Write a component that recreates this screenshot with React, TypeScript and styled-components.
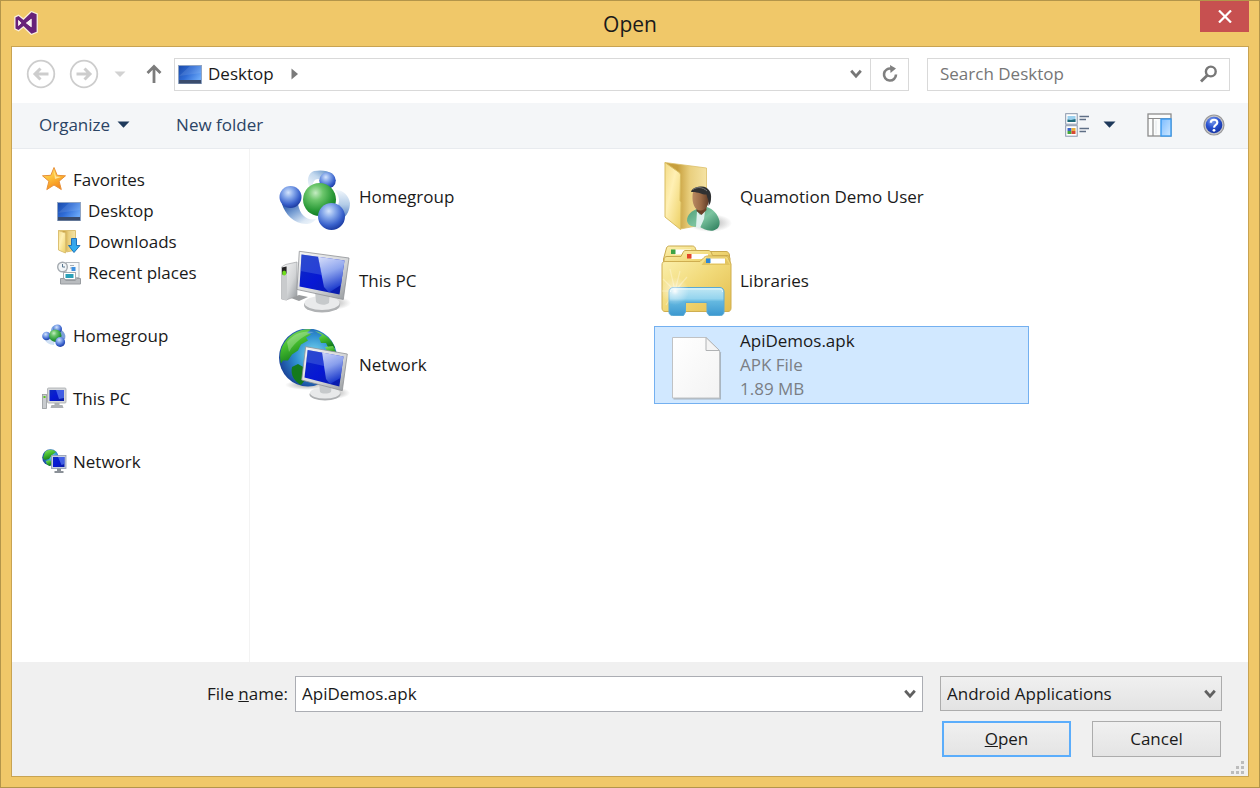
import React from "react";
import styled, { createGlobalStyle } from "styled-components";

const GlobalStyle = createGlobalStyle`
  *, *::before, *::after { box-sizing: border-box; }
  body {
    margin: 0;
    font-family: "Open Sans", "Noto Sans", sans-serif;
    font-size: 17px;
    line-height: 24px;
    color: #1a1a1a;
  }
  button, input, select {
    font: inherit;
    color: inherit;
    margin: 0;
    padding: 0;
    border: 0;
    border-radius: 0;
    background: none;
    outline: none;
  }
  svg { display: block; flex: none; }
`;

/* ---------- window frame ---------- */

const Frame = styled.div`
  display: flex;
  flex-direction: column;
  min-height: 100vh;
  padding: 0 10px 10px;
  background: #f0c869;
  border: 1px solid #b3954a;
`;

const TitleBar = styled.header`
  display: grid;
  grid-template-columns: 1fr auto 1fr;
  align-items: center;
  height: 45px;
`;

const AppMark = styled.div`
  padding: 0 0 2px 3px;
`;

const Title = styled.h1`
  margin: 0;
  font-size: 21px;
  font-weight: 400;
  line-height: 28px;
`;

const CloseButton = styled.button`
  display: grid;
  place-items: center;
  align-self: start;
  justify-self: end;
  width: 49px;
  height: 31px;
  background: #c75050;
`;

const Dialog = styled.main`
  display: flex;
  flex-direction: column;
  flex: 1;
  background: #fff;
  border: 1px solid #c8a352;
`;

/* ---------- navigation row ---------- */

const NavRow = styled.div`
  display: flex;
  align-items: center;
  height: 56px;
  padding: 0 18px 2px 14px;
`;

const History = styled.div`
  display: flex;
  align-items: center;
  gap: 13px;
  margin-right: 9px;
`;

const IconButton = styled.button`
  display: grid;
  place-items: center;
`;

const AddressBar = styled.div`
  display: flex;
  flex: 1;
  height: 33px;
  margin-right: 18px;
  border: 1px solid #d9d9d9;
`;

const Crumb = styled.button`
  display: flex;
  align-items: center;
  gap: 6px;
  padding: 0 3px;
`;

const CrumbArrow = styled.span`
  padding-left: 11px;
`;

const AddressDrop = styled(IconButton)`
  width: 28px;
  margin-left: auto;
`;

const Refresh = styled(IconButton)`
  width: 38px;
  border-left: 1px solid #d9d9d9;
`;

const SearchBox = styled.form`
  display: flex;
  align-items: center;
  width: 303px;
  height: 33px;
  padding: 0 11px 0 12px;
  border: 1px solid #d9d9d9;

  input {
    flex: 1;
    min-width: 0;
  }
  input::placeholder {
    color: #767676;
    opacity: 1;
  }
`;

/* ---------- command bar ---------- */

const CommandBar = styled.div`
  display: flex;
  align-items: center;
  height: 46px;
  padding: 0 23px 2px 27px;
  color: #2b4465;
  background: #f4f6f8;
  border-bottom: 1px solid #e8ebef;
`;

const Command = styled.button`
  display: flex;
  align-items: center;
  gap: 7px;
  margin-right: 46px;
`;

const ViewTools = styled.div`
  display: flex;
  align-items: center;
  gap: 31px;
  margin-left: auto;
`;

const ViewMode = styled.button`
  display: flex;
  align-items: center;
  gap: 14px;
`;

/* ---------- body ---------- */

const Body = styled.div`
  display: flex;
  flex: 1;
`;

const Tree = styled.nav`
  display: flex;
  flex-direction: column;
  gap: 32px;
  width: 238px;
  padding: 15px 8px 15px 30px;
  border-right: 1px solid #f3f3f3;
`;

const TreeGroup = styled.div`
  display: flex;
  flex-direction: column;
`;

const TreeItem = styled.button<{ $child?: boolean }>`
  display: flex;
  align-items: center;
  gap: 7px;
  height: 31px;
  padding-left: ${(p) => (p.$child ? 15 : 0)}px;
  text-align: left;
`;

const Tiles = styled.section`
  display: grid;
  grid-template-columns: repeat(auto-fill, 375px);
  align-content: start;
  gap: 6px;
  flex: 1;
  padding: 9px 0 9px 23px;
`;

const Tile = styled.button<{ $selected?: boolean }>`
  display: flex;
  align-items: center;
  gap: 8px;
  height: 78px;
  padding: 0 5px;
  text-align: left;
  border: 1px solid ${(p) => (p.$selected ? "#74b0f0" : "transparent")};
  background: ${(p) => (p.$selected ? "#d1e8ff" : "transparent")};
`;

const TileText = styled.span`
  display: flex;
  flex-direction: column;
`;

const Detail = styled.span`
  color: #7b7f85;
`;

/* ---------- footer ---------- */

const Footer = styled.footer`
  position: relative;
  display: flex;
  flex-direction: column;
  gap: 9px;
  padding: 14px 26px 19px 12px;
  background: #f0f0f0;
`;

const FieldRow = styled.div`
  display: flex;
  align-items: flex-start;
`;

const FieldLabel = styled.label`
  width: 264px;
  margin-right: 7px;
  line-height: 35px;
  text-align: right;
`;

const FileCombo = styled.div`
  display: flex;
  flex: 1;
  height: 36px;
  margin-right: 17px;
  background: #fff;
  border: 1px solid #abadb3;

  input {
    flex: 1;
    min-width: 0;
    padding-left: 6px;
  }
  button {
    width: 25px;
  }
`;

const TypeSelect = styled.div`
  position: relative;
  width: 282px;
  height: 35px;

  select {
    width: 100%;
    height: 100%;
    padding-left: 6px;
    appearance: none;
    border: 1px solid #acacac;
    background: linear-gradient(#f0f0f0, #e3e3e3);
  }
  svg {
    position: absolute;
    top: 13px;
    right: 6px;
    pointer-events: none;
  }
`;

const Actions = styled.div`
  display: flex;
  justify-content: flex-end;
  gap: 21px;
  padding-right: 1px;
`;

const ActionButton = styled.button<{ $primary?: boolean }>`
  width: 129px;
  height: 36px;
  border: ${(p) => (p.$primary ? "2px solid #5badfb" : "1px solid #acacac")};
  background: linear-gradient(#f0f0f0, #e4e4e4);
`;

const Grip = styled.div`
  position: absolute;
  right: 4px;
  bottom: 2px;
`;

/* ---------- glyphs ---------- */

const Defs = () => (
  <svg width="0" height="0" style={{ position: "absolute" }} aria-hidden="true">
    <defs>
      <radialGradient id="blueBall" cx="0.4" cy="0.3" r="0.7">
        <stop offset="0" stopColor="#d4e4fc" />
        <stop offset="0.35" stopColor="#86a8ea" />
        <stop offset="0.75" stopColor="#3a62cc" />
        <stop offset="1" stopColor="#1e3ea4" />
      </radialGradient>
      <radialGradient id="greenBall" cx="0.38" cy="0.3" r="0.75">
        <stop offset="0" stopColor="#c4ecc2" />
        <stop offset="0.3" stopColor="#6cc66c" />
        <stop offset="0.7" stopColor="#2a9a38" />
        <stop offset="1" stopColor="#0f7420" />
      </radialGradient>
      <linearGradient id="swooshDown" x1="0" y1="0" x2="1" y2="1">
        <stop offset="0" stopColor="#1f4ea4" />
        <stop offset="0.4" stopColor="#7fa4d6" />
        <stop offset="0.75" stopColor="#dce8f5" />
        <stop offset="1" stopColor="#f6fafd" />
      </linearGradient>
      <linearGradient id="swooshUp" x1="0" y1="1" x2="1" y2="0">
        <stop offset="0" stopColor="#f4f8fc" />
        <stop offset="0.5" stopColor="#c2d8ee" />
        <stop offset="1" stopColor="#4a80bc" />
      </linearGradient>
      <linearGradient id="swooshRight" x1="0" y1="0" x2="0" y2="1">
        <stop offset="0" stopColor="#f2f7fc" />
        <stop offset="0.5" stopColor="#b4cde8" />
        <stop offset="1" stopColor="#4b78be" />
      </linearGradient>
      <linearGradient id="screen" x1="0" y1="0" x2="1" y2="1">
        <stop offset="0" stopColor="#0e2cc0" />
        <stop offset="0.5" stopColor="#0718d4" />
        <stop offset="1" stopColor="#0a1ea0" />
      </linearGradient>
      <linearGradient id="glare" x1="0" y1="0" x2="0.3" y2="1">
        <stop offset="0" stopColor="#f0f5ff" />
        <stop offset="0.5" stopColor="#9fb6f2" />
        <stop offset="1" stopColor="#1f3fd0" />
      </linearGradient>
      <linearGradient id="metal" x1="0" y1="0" x2="1" y2="1">
        <stop offset="0" stopColor="#f6f6f6" />
        <stop offset="0.6" stopColor="#d2d4d6" />
        <stop offset="1" stopColor="#94989c" />
      </linearGradient>
      <radialGradient id="ocean" cx="0.6" cy="0.45" r="0.65">
        <stop offset="0" stopColor="#7fdcf2" />
        <stop offset="0.5" stopColor="#2f8fd0" />
        <stop offset="1" stopColor="#173a92" />
      </radialGradient>
      <linearGradient id="land" x1="0" y1="0" x2="0.4" y2="1">
        <stop offset="0" stopColor="#8fe070" />
        <stop offset="0.5" stopColor="#46bd2e" />
        <stop offset="1" stopColor="#127c1c" />
      </linearGradient>
      <linearGradient id="folder" x1="0" y1="0" x2="1" y2="1">
        <stop offset="0" stopColor="#fcf1b0" />
        <stop offset="0.5" stopColor="#f1d978" />
        <stop offset="1" stopColor="#e3bd4e" />
      </linearGradient>
      <linearGradient id="folderInside" x1="0" y1="0" x2="1" y2="0">
        <stop offset="0.3" stopColor="#c79f3c" />
        <stop offset="0.6" stopColor="#e9cf7e" />
        <stop offset="1" stopColor="#f5e3a4" />
      </linearGradient>
      <linearGradient id="flap" x1="0" y1="0" x2="1" y2="1">
        <stop offset="0" stopColor="#f4dc88" />
        <stop offset="0.4" stopColor="#fff0b4" />
        <stop offset="1" stopColor="#eccf62" />
      </linearGradient>
      <linearGradient id="skin" x1="0" y1="0" x2="1" y2="0">
        <stop offset="0" stopColor="#b98a62" />
        <stop offset="0.5" stopColor="#9a6a46" />
        <stop offset="1" stopColor="#5a3724" />
      </linearGradient>
      <linearGradient id="shirt" x1="0" y1="0" x2="1" y2="1">
        <stop offset="0" stopColor="#4c9c76" />
        <stop offset="0.5" stopColor="#7cc4a0" />
        <stop offset="1" stopColor="#287a58" />
      </linearGradient>
      <linearGradient id="stand" x1="0" y1="0" x2="0" y2="1">
        <stop offset="0" stopColor="#c2e8f4" />
        <stop offset="0.4" stopColor="#94d4ee" />
        <stop offset="0.5" stopColor="#64b8e0" />
        <stop offset="1" stopColor="#3c98d0" />
      </linearGradient>
      <radialGradient id="shine">
        <stop offset="0" stopColor="#fff" stopOpacity="0.95" />
        <stop offset="0.3" stopColor="#fff" stopOpacity="0.45" />
        <stop offset="1" stopColor="#fff" stopOpacity="0" />
      </radialGradient>
      <radialGradient id="shade">
        <stop offset="0" stopColor="#555" stopOpacity="0.5" />
        <stop offset="1" stopColor="#555" stopOpacity="0" />
      </radialGradient>
      <linearGradient id="sheet" x1="0" y1="0" x2="1" y2="1">
        <stop offset="0" stopColor="#fff" />
        <stop offset="1" stopColor="#f3f3f3" />
      </linearGradient>
      <linearGradient id="desk" x1="0" y1="0" x2="1" y2="0.6">
        <stop offset="0" stopColor="#1a49a8" />
        <stop offset="0.5" stopColor="#2f6cd6" />
        <stop offset="1" stopColor="#6aa8f8" />
      </linearGradient>
      <linearGradient id="star" x1="0" y1="0" x2="0.5" y2="1">
        <stop offset="0" stopColor="#ffe680" />
        <stop offset="0.5" stopColor="#fdc23a" />
        <stop offset="1" stopColor="#f58a1c" />
      </linearGradient>
      <linearGradient id="arrow" x1="0" y1="0" x2="0" y2="1">
        <stop offset="0" stopColor="#3f9fe6" />
        <stop offset="1" stopColor="#2cb4f4" />
      </linearGradient>
      <linearGradient id="pane" x1="0" y1="0" x2="1" y2="1">
        <stop offset="0" stopColor="#7cbcff" />
        <stop offset="1" stopColor="#cfe8ff" />
      </linearGradient>
      <radialGradient id="help" cx="0.4" cy="0.25" r="0.8">
        <stop offset="0" stopColor="#7fa0ee" />
        <stop offset="0.5" stopColor="#2a52d0" />
        <stop offset="1" stopColor="#1230a0" />
      </radialGradient>
    </defs>
  </svg>
);

const Big = ({ children }: { children: React.ReactNode }) => (
  <svg width="72" height="72" viewBox="0 0 72 72" aria-hidden="true">{children}</svg>
);
const Small = ({ children }: { children: React.ReactNode }) => (
  <svg width="24" height="24" viewBox="0 0 24 24" overflow="visible" aria-hidden="true">{children}</svg>
);

const HomegroupBig = () => (
  <Big>
    <path d="M3 43c3 10 12 20 24 20 4 0 7-1 10-5-8 2-16-3-18-15z" fill="url(#swooshDown)" />
    <path d="M31 27c-4-7-2-15 4-17 6-1 13-1 19 3l-12 6c-5-3-8 1-9 7z" fill="url(#swooshUp)" />
    <path d="M56 29c7-1 14 5 15 13 0 7-3 13-8 16l-4-14c2-5 1-9-3-15z" fill="url(#swooshRight)" />
    <circle cx="48.5" cy="19.5" r="8.3" fill="url(#blueBall)" />
    <circle cx="11.5" cy="36" r="11" fill="url(#blueBall)" />
    <circle cx="40.5" cy="38.5" r="16.5" fill="url(#greenBall)" />
    <circle cx="52.5" cy="55.5" r="13.5" fill="url(#blueBall)" />
  </Big>
);

const PcBig = () => (
  <Big>
    <ellipse cx="52" cy="58" rx="20" ry="7" fill="url(#shade)" />
    <path d="M2.5 22l4-2.5L18 17v34l-11 4-4.5-1z" fill="url(#metal)" stroke="#a2a4a6" strokeWidth="0.7" />
    <path d="M2.5 22.5l5.5-1v34l-5.5-1.5z" fill="#c9cbcd" />
    <path d="M3 22.5l4.500-1v7l-4.500 1z" fill="#222" />
    <ellipse cx="5.200" cy="28" rx="2" ry="2.600" fill="#6edc1c" />
    <path d="M12 53l8-3 9 2-9 4z" fill="#9a9c9e" />
    <ellipse cx="43" cy="60" rx="18" ry="7.500" fill="#b0b2b4" />
    <ellipse cx="43" cy="58" rx="17.500" ry="7" fill="#e9eaeb" />
    <path d="M36 46h15l-1 12c-4 3-10 2-13-1z" fill="#c6c9cb" />
    <path d="M20.300 6.300L70 13l-5.700 41.500L18 44.500z" fill="url(#metal)" stroke="#8f9295" strokeWidth="0.800" />
    <path d="M22.500 9.500L65.500 15.500 60.500 49.500 20.500 41.500z" fill="url(#screen)" />
    <path d="M39 11.800L65.500 15.500 62 40 50 47.400 45 42z" fill="url(#glare)" opacity="0.900" />
    <path d="M22.500 9.500L39 11.800 43 30 21.500 26z" fill="#5576e0" opacity="0.400" />
  </Big>
);

const NetworkBig = () => (
  <Big>
    <ellipse cx="28" cy="56" rx="22" ry="5" fill="url(#shade)" />
    <circle cx="29" cy="28.500" r="29" fill="url(#ocean)" />
    <path d="M14 5C20 1 27-.5 32 .5l-4 3 4 2-5 3 2 3-7 4-3 6-6 4-4 6-5 0-2 3C-1 22 4 12 14 5z" fill="url(#land)" />
    <path d="M36 2c9 2 17 8 20 17l-6 1-3-6-5 0-2-5 3-3z" fill="url(#land)" />
    <path d="M13 38l6-3 7 4 3 4-3 8-4 5C16 53 11 46 13 38z" fill="#147a1c" />
    <path d="M46 18l8-1 4 8-8 1z" fill="url(#land)" />
    <path d="M8 13C15 4 25 1 35 3 26 6 16 12 10 23z" fill="#fff" opacity="0.250" />
    <ellipse cx="54" cy="64" rx="17" ry="6" fill="url(#shade)" />
    <ellipse cx="46" cy="65.500" rx="15.500" ry="6" fill="#aeb0b2" />
    <ellipse cx="46" cy="64" rx="15" ry="5.500" fill="#e8e9ea" />
    <path d="M40 54h13l-1 9c-3 2-9 2-11 0z" fill="#c6c9cb" />
    <path d="M26.700 17.700L68.300 25 63.300 61.700 22.700 51z" fill="url(#metal)" stroke="#8f9295" strokeWidth="0.800" />
    <path d="M28.700 21L64.500 27.500 60.300 57.500 25.500 48.500z" fill="url(#screen)" />
    <path d="M43 23.600L64.500 27.500 61.500 49 51 55 47 50z" fill="url(#glare)" opacity="0.850" />
    <path d="M28.700 21L43 23.600 45 37 27 33z" fill="#5576e0" opacity="0.400" />
  </Big>
);

const UserBig = () => (
  <Big>
    <ellipse cx="50" cy="62" rx="22" ry="9" fill="url(#shade)" />
    <path d="M5 1.500L46.500 7v56l-26 5z" fill="url(#folderInside)" stroke="#dcbf68" strokeWidth="0.800" />
    <path d="M5 1.500L18.500 11c1.500 1 2 2 2 3.500l-.5 25 1 2-.5 27L5 56z" fill="url(#flap)" stroke="#d9bd62" strokeWidth="1" />
    <path d="M27 60c0-7 5-10 10-12l10-2c6 2 11 7 12.500 14 .5 5-1 8-6 9.500-6 1-11-2-14-4-3 .5-11 1-12.500-5.500z" fill="url(#shirt)" />
    <path d="M37 50l3 4 5-4-1 8-4 9-4-1z" fill="#dff0ee" />
    <path d="M37 44l9-2 .5 7-5 5-5-4z" fill="#6b4028" />
    <path d="M32.500 35c0-6 4-9 9-9 6 0 8.500 5 8 11-.5 7-4 12.500-9 12.500-6 0-8.500-8-8-14.500z" fill="url(#skin)" />
    <path d="M31 31c1-4 6-5.500 11-5.500C48 26 52 30.500 51 38c0 3-1 5-2.500 7 .5-4 0-6-1-8l-1-3.500c-4 .5-8-3-15.500-2.500z" fill="#303132" />
    <path d="M33 28.500c4-3 10-2.500 14 1.500" fill="none" stroke="#77797a" strokeWidth="1" />
  </Big>
);

const LibrariesBig = () => (
  <Big>
    <path d="M3.500 22V14l3-11c.5-1.500 1.500-2 3-2h23c1.500 0 2.500 1 3 2.500l1 3H66c2 0 3 1.500 3.500 3.500V24z" fill="url(#folder)" stroke="#c9a94e" />
    <rect x="15" y="4.500" width="16" height="5" fill="#fff" />
    <rect x="11" y="4.500" width="4.500" height="4.500" fill="#3ea345" />
    <path d="M4 24v-9c0-2 1-3.500 3-3.500h14l2-4C23.500 6 24.500 5.500 26 5.500h22c2 0 3 1 3.500 2.500l1 2.500H67c1.500 0 2.500 1 3 3V24z" fill="url(#folder)" stroke="#c9a94e" />
    <rect x="31" y="9" width="17" height="5" fill="#fff" />
    <rect x="27" y="9" width="4.500" height="4.500" fill="#e2452a" />
    <path d="M2 20c0-2.500 1-3.500 3-3.500h35l4-4c1-1 2-1.500 4-1.500h17c2 0 3 1 3.500 2.500L71 19v44c0 2-1 3.500-3 3.500H5c-2 0-3-1.500-3-3.500z" fill="url(#folder)" stroke="#cfae50" />
    <path d="M41.500 20L47 12.500h18L70 20z" fill="#e3c560" />
    <rect x="50" y="13.500" width="15" height="5" fill="#fff" />
    <rect x="46" y="13.500" width="4.500" height="4.500" fill="#2c87d8" />
    <path d="M15 46L3 34M15 46L10 24M15 46l5-20M15 46l12-14M15 46H2M15 46L6 60" stroke="#fff8d8" strokeWidth="1.200" opacity="0.450" />
    <path d="M9 47c0-2.500 1.500-4.500 4-4.500h47c2.500 0 4 2 4 4.500v20c0 2-1.500 3.500-3.500 3.500H49l-2-3V57.500H25.500V67l-2 3.500h-11C10.500 70.500 9 69 9 67z" fill="url(#stand)" stroke="#5aa9d4" />
    <path d="M10.500 47c0-2 1-3 2.500-3h47c1.500 0 2.500 1 2.500 3" fill="none" stroke="#e4f8fc" />
    <circle cx="15" cy="46" r="14" fill="url(#shine)" />
  </Big>
);

const FileBig = () => (
  <Big>
    <path d="M13.500 9.500H47l14 14V70.500H13.500z" fill="#8e9499" opacity="0.600" />
    <path d="M12.500 8.500H46L59.500 22V69H12.500z" fill="url(#sheet)" stroke="#c0c2c4" />
    <path d="M46 8.500V21.500H59.500z" fill="#f4f4f4" stroke="#b0b2b4" strokeLinejoin="round" />
  </Big>
);

const StarIcon = () => (
  <Small>
    <path d="M12-.5l3.200 7.800 8.300.5-6.400 5.400 2.200 8.300L12 17l-7.200 4.600 2.100-8.400L.5 7.800l8.300-.5z" fill="url(#star)" stroke="#e8913a" strokeLinejoin="round" />
    <path d="M12 3l2 5.500 5 .5-6 2z" fill="#fff6c4" opacity="0.700" />
  </Small>
);

const DesktopIcon = () => (
  <Small>
    <rect x="0.500" y="3.500" width="23" height="18" fill="url(#desk)" stroke="#8fa4c4" />
    <path d="M1 14L12 4h11v7z" fill="#fff" opacity="0.100" />
    <rect x="1" y="18" width="22" height="3.500" fill="#3a4c6c" />
  </Small>
);

const DownloadsIcon = () => (
  <Small>
    <path d="M1.500.5H18.500V20l-9 2z" fill="url(#folderInside)" stroke="#dcc072" />
    <path d="M1.500.5l7 2.500v20l-7-3z" fill="url(#flap)" stroke="#dcc072" />
    <path d="M14.500 8.500h5v7h3.500L17 22.500 11.500 15.500h3z" fill="url(#arrow)" stroke="#1f72b8" strokeLinejoin="round" />
  </Small>
);

const RecentIcon = () => (
  <Small>
    <rect x="9" y="1.500" width="13" height="15" fill="#f7f9fa" stroke="#b4b9be" />
    <path d="M13 4.500h4M13 7h3" stroke="#a8b0b8" />
    <rect x="14.500" y="6" width="4" height="4" fill="#3d8fe0" />
    <rect x="6.500" y="11.500" width="12" height="7" fill="#fff" stroke="#a6acb2" />
    <rect x="8.500" y="13" width="8" height="4" fill="#2aa0b8" />
    <path d="M3.500 17.500h4l1 2h10l1-2H23.500V23H3.500z" fill="#b9bcbf" stroke="#989ca0" />
    <circle cx="5.500" cy="6" r="4.800" fill="#f2f5f7" stroke="#a4aab0" strokeWidth="1.400" />
    <path d="M5.500 3v3H8" fill="none" stroke="#5a7890" />
  </Small>
);

const HomegroupIcon = () => (
  <Small>
    <path d="M2 14c1 4 5 7 10 7l1-4-6-4z" fill="#cfe0f4" />
    <path d="M19 6c4 2 5 6 4 9l-5 2z" fill="#7d9fd8" />
    <path d="M9 8c0-5 2-7 6-7l-1 6z" fill="#7aa6dc" />
    <circle cx="15.500" cy="5" r="4.500" fill="url(#blueBall)" />
    <circle cx="4.500" cy="12" r="4.300" fill="url(#blueBall)" />
    <circle cx="13.300" cy="11.700" r="6.200" fill="url(#greenBall)" />
    <circle cx="18.200" cy="18" r="4.900" fill="url(#blueBall)" />
  </Small>
);

const PcIcon = () => (
  <Small>
    <rect x="0.500" y="7.500" width="4" height="14" fill="#c9cccf" stroke="#96999c" strokeWidth="0.800" />
    <rect x="1.500" y="9" width="2" height="2" fill="#58c81c" />
    <path d="M12.500 15h5v3h3l1 3H8.500l1-3h3z" fill="#aeb1b4" />
    <rect x="5.500" y="1" width="18.500" height="15" rx="1" fill="#d6d8da" stroke="#a6a9ac" strokeWidth="0.800" />
    <rect x="7.500" y="3" width="14.500" height="11" fill="url(#screen)" />
    <path d="M14 3h8v8l-5 1z" fill="#5a7cf0" opacity="0.700" />
  </Small>
);

const NetworkIcon = () => (
  <Small>
    <circle cx="8.500" cy="7.500" r="8.300" fill="url(#ocean)" />
    <path d="M3 2C6-.8 11-1 14 2l-4 3-3 4-4 1-2-2z" fill="url(#land)" />
    <path d="M4 11l4-1 2 3-2 3c-2-.5-4-2-4-5z" fill="url(#land)" />
    <path d="M15 18h4v3h2.500v2h-9v-2H15z" fill="#8b9198" />
    <rect x="9.500" y="5.500" width="14.500" height="13" fill="#c5cede" stroke="#8e9ab0" strokeWidth="0.800" />
    <rect x="11" y="7" width="11.500" height="10" fill="url(#screen)" />
    <path d="M16 7h6.500v7l-3 1z" fill="#5a7cf0" opacity="0.700" />
  </Small>
);

const StudioMark = () => (
  <svg width="24" height="24" viewBox="0 0 24 24" role="img" aria-label="Visual Studio">
    <path
      fillRule="evenodd"
      d="M1.500 6.500L4.500 5 9.500 9 17.500 1.300 22.600 3.300V20.700L17.500 22.700 9.500 15 4.500 19 1.500 17.500zM4.300 9V15L7.300 12zM17.500 7.800V16.200L12 12z"
      fill="#68217a"
      stroke="#f8eedd"
      strokeWidth="2.600"
      paintOrder="stroke"
    />
    <path d="M4.300 9V15L7.300 12zM17.500 7.800V16.200L12 12z" fill="#f8f0f4" />
  </svg>
);

const RoundArrow = ({ flip }: { flip?: boolean }) => (
  <svg width="30" height="30" viewBox="0 0 30 30" fill="none" stroke="#cdcdcd" aria-hidden="true">
    <circle cx="15" cy="15" r="13.300" strokeWidth="1.800" />
    <path d={flip ? "M7.500 15H21M15.500 9.500L21 15L15.500 20.500" : "M22.500 15H9M14.500 9.500L9 15L14.500 20.500"} strokeWidth="3" />
  </svg>
);

const Triangle = ({ color }: { color: string }) => (
  <svg width="13" height="7" viewBox="0 0 13 7" aria-hidden="true">
    <path d="M0.500 0.500H12.500L6.500 6.800z" fill={color} />
  </svg>
);

const Chevron = ({ color }: { color: string }) => (
  <svg width="12" height="10" viewBox="0 0 12 10" fill="none" aria-hidden="true">
    <path d="M1.200 1.800L6 7.200L10.800 1.800" stroke={color} strokeWidth="2.800" />
  </svg>
);

/* ---------- data ---------- */

const places = [
  [
    { name: "Favorites", Icon: StarIcon },
    { name: "Desktop", Icon: DesktopIcon, child: true },
    { name: "Downloads", Icon: DownloadsIcon, child: true },
    { name: "Recent places", Icon: RecentIcon, child: true },
  ],
  [{ name: "Homegroup", Icon: HomegroupIcon }],
  [{ name: "This PC", Icon: PcIcon }],
  [{ name: "Network", Icon: NetworkIcon }],
] as { name: string; Icon: React.FC; child?: boolean }[][];

const items: { name: string; Icon: React.FC; details?: string[]; selected?: boolean }[] = [
  { name: "Homegroup", Icon: HomegroupBig },
  { name: "Quamotion Demo User", Icon: UserBig },
  { name: "This PC", Icon: PcBig },
  { name: "Libraries", Icon: LibrariesBig },
  { name: "Network", Icon: NetworkBig },
  { name: "ApiDemos.apk", Icon: FileBig, details: ["APK File", "1.89 MB"], selected: true },
];

export default function App() {
  return (
    <Frame>
      <GlobalStyle />
      <Defs />
      <TitleBar>
        <AppMark><StudioMark /></AppMark>
        <Title>Open</Title>
        <CloseButton aria-label="Close">
          <svg width="14" height="13" viewBox="0 0 14 13" fill="none" aria-hidden="true">
            <path d="M1 0.500L13 12.500M13 0.500L1 12.500" stroke="#fff" strokeWidth="2.200" />
          </svg>
        </CloseButton>
      </TitleBar>

      <Dialog>
        <NavRow>
          <History>
            <IconButton aria-label="Back"><RoundArrow /></IconButton>
            <IconButton aria-label="Forward"><RoundArrow flip /></IconButton>
            <IconButton aria-label="Recent locations">
              <svg width="16" height="7" viewBox="0 0 16 7" aria-hidden="true">
                <path d="M2.500 0.500H13.500L8 6z" fill="#d2d2d2" />
              </svg>
            </IconButton>
            <IconButton aria-label="Up">
              <svg width="24" height="20" viewBox="0 0 24 20" fill="none" stroke="#7c7c7c" aria-hidden="true">
                <path d="M13 19V3M6.500 9L13 2.500L19.500 9" strokeWidth="2.800" />
              </svg>
            </IconButton>
          </History>
          <AddressBar>
            <Crumb>
              <DesktopIcon />
              Desktop
              <CrumbArrow>
                <svg width="8" height="12" viewBox="0 0 8 12" aria-hidden="true">
                  <path d="M0.500 0.500L7 6L0.500 11.500z" fill="#7a7a7a" />
                </svg>
              </CrumbArrow>
            </Crumb>
            <AddressDrop aria-label="Previous locations"><Chevron color="#777" /></AddressDrop>
            <Refresh aria-label="Refresh">
              <svg width="18" height="18" viewBox="0 0 18 18" fill="none" aria-hidden="true">
                <path d="M10.500 3.700A6 6 0 1 0 15 9.500" stroke="#808080" strokeWidth="2.600" />
                <path d="M9 0L15 3.500L9.500 8z" fill="#808080" />
              </svg>
            </Refresh>
          </AddressBar>
          <SearchBox onSubmit={(e) => e.preventDefault()}>
            <input type="text" placeholder="Search Desktop" aria-label="Search Desktop" />
            <IconButton aria-label="Search">
              <svg width="18" height="18" viewBox="0 0 18 18" fill="none" stroke="#777" aria-hidden="true">
                <circle cx="10.800" cy="6.500" r="4.900" strokeWidth="2.400" />
                <path d="M7.300 10.200L1 16.500" strokeWidth="2.800" />
              </svg>
            </IconButton>
          </SearchBox>
        </NavRow>

        <CommandBar>
          <Command>Organize <Triangle color="#1e395b" /></Command>
          <Command>New folder</Command>
          <ViewTools>
            <ViewMode aria-label="Change your view">
              <svg width="24" height="24" viewBox="0 0 24 24" aria-hidden="true">
                <rect x="0.700" y="0.700" width="11.500" height="10.500" fill="#fff" stroke="#8795aa" />
                <rect x="2.500" y="3" width="8" height="6" fill="#9bd0ee" />
                <path d="M2.500 9V6.500L6 7l4.500-1V9z" fill="#1f6a78" />
                <rect x="0.700" y="12.700" width="11.500" height="10.500" fill="#fff" stroke="#8795aa" />
                <rect x="2.500" y="15" width="4" height="3" fill="#3c62c8" />
                <rect x="6.500" y="15" width="4" height="3" fill="#e8b03c" />
                <rect x="2.500" y="18" width="4" height="3" fill="#44a83c" />
                <rect x="6.500" y="18" width="4" height="3" fill="#d84a34" />
                <path d="M14.500 3.500H24M14.500 6.500H21M14.500 15.500H24M14.500 18.500H21" stroke="#5f6f86" strokeWidth="1.400" />
              </svg>
              <Triangle color="#1e395b" />
            </ViewMode>
            <IconButton aria-label="Show the preview pane">
              <svg width="25" height="24" viewBox="0 0 25 24" aria-hidden="true">
                <rect x="1" y="1" width="23" height="22" fill="#fbfcfc" stroke="#8c8c8c" strokeWidth="1.300" />
                <path d="M1 5.500H24M6 5.500V23" stroke="#8c8c8c" strokeWidth="1.200" />
                <path d="M9 7.500V21" stroke="#e2e6ea" />
                <rect x="14" y="6" width="10" height="17" fill="url(#pane)" stroke="#3a9af0" strokeWidth="1.400" />
              </svg>
            </IconButton>
            <IconButton aria-label="Get help">
              <svg width="22" height="22" viewBox="0 0 22 22" aria-hidden="true">
                <circle cx="11" cy="11" r="10" fill="#c4c4c8" stroke="#98989a" strokeWidth="1.200" />
                <circle cx="11" cy="11" r="8.300" fill="url(#help)" />
                <path d="M7.800 8.800C7.800 4.800 14.300 4.800 14.300 8.500C14.300 11 11.200 10.800 11 13.600" fill="none" stroke="#fff" strokeWidth="2.200" />
                <circle cx="11" cy="16.300" r="1.400" fill="#fff" />
              </svg>
            </IconButton>
          </ViewTools>
        </CommandBar>

        <Body>
          <Tree aria-label="Places">
            {places.map((group) => (
              <TreeGroup key={group[0].name}>
                {group.map(({ name, Icon, child }) => (
                  <TreeItem key={name} $child={child}><Icon />{name}</TreeItem>
                ))}
              </TreeGroup>
            ))}
          </Tree>
          <Tiles aria-label="Items">
            {items.map(({ name, Icon, details, selected }) => (
              <Tile key={name} $selected={selected} aria-pressed={!!selected}>
                <Icon />
                <TileText>
                  <span>{name}</span>
                  {details?.map((d) => <Detail key={d}>{d}</Detail>)}
                </TileText>
              </Tile>
            ))}
          </Tiles>
        </Body>

        <Footer>
          <FieldRow>
            <FieldLabel htmlFor="filename">File <u>n</u>ame:</FieldLabel>
            <FileCombo>
              <input id="filename" type="text" defaultValue="ApiDemos.apk" />
              <IconButton aria-label="Recent file names"><Chevron color="#606060" /></IconButton>
            </FileCombo>
            <TypeSelect>
              <select aria-label="File type" defaultValue="apk">
                <option value="apk">Android Applications</option>
              </select>
              <Chevron color="#606060" />
            </TypeSelect>
          </FieldRow>
          <Actions>
            <ActionButton $primary><u>O</u>pen</ActionButton>
            <ActionButton>Cancel</ActionButton>
          </Actions>
          <Grip>
            <svg width="13" height="13" viewBox="0 0 13 13" fill="#bcbcbc" aria-hidden="true">
              <path d="M10 0h3v3h-3zM10 5h3v3h-3zM10 10h3v3h-3zM5 5h3v3H5zM5 10h3v3H5zM0 10h3v3H0z" />
            </svg>
          </Grip>
        </Footer>
      </Dialog>
    </Frame>
  );
}
